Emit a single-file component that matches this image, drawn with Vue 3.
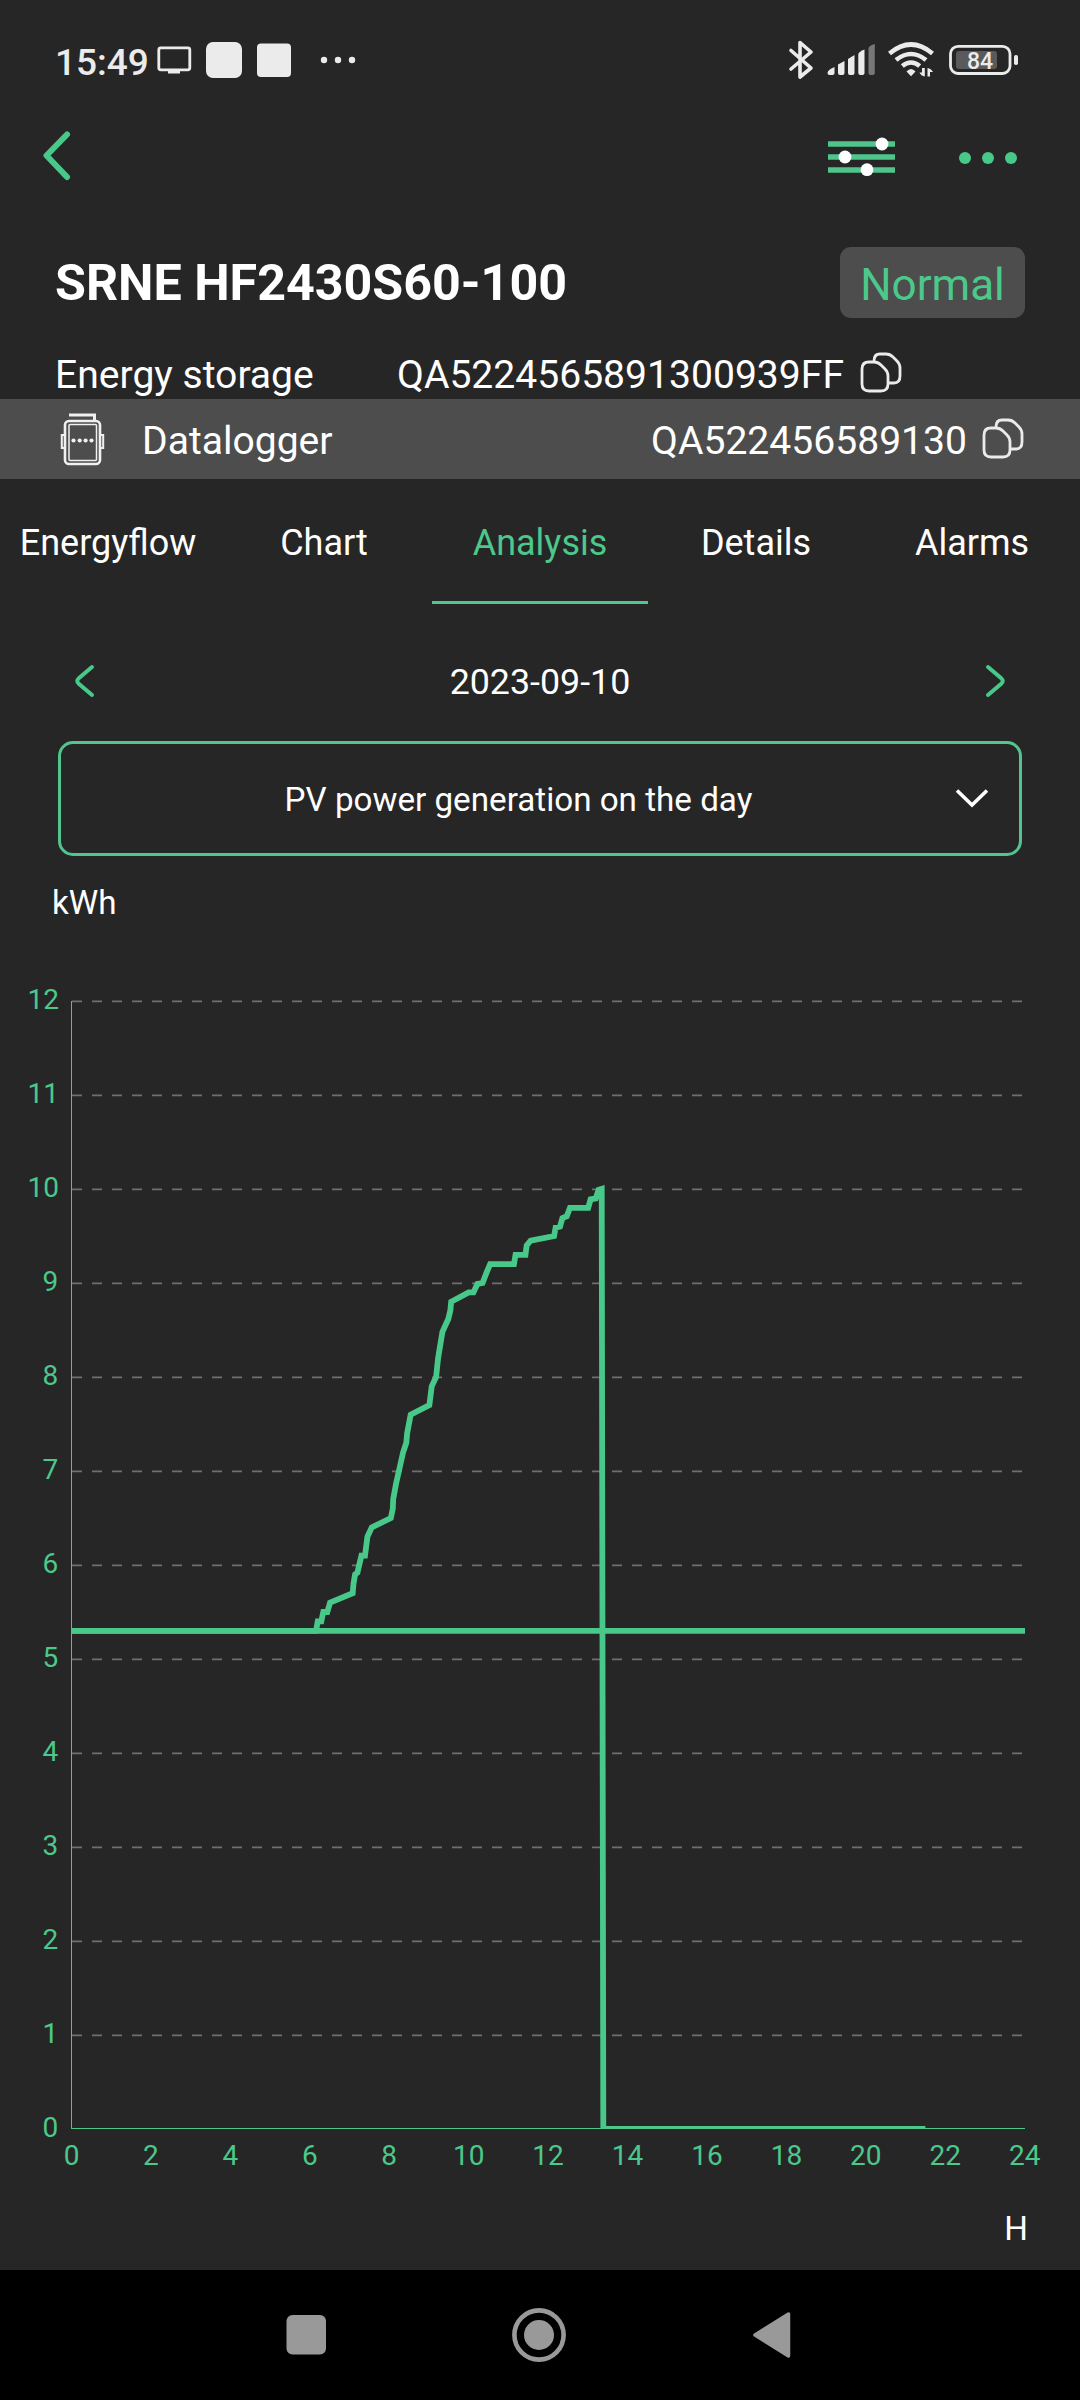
<template>
  <div class="phone">
    <div class="status">
      <span class="time">15:49</span>
      <svg class="notices" width="200" height="44" viewBox="156 38 200 44">
        <rect x="158.8" y="47.8" width="31" height="22" rx="2" fill="none" stroke="#ebebeb" stroke-width="2.8" />
        <rect x="168" y="70" width="12" height="3.5" fill="#ebebeb" />
        <rect x="206" y="42" width="36" height="36" rx="7" fill="#ebebeb" />
        <rect x="257" y="43.5" width="34" height="33.5" rx="4" fill="#ebebeb" />
        <circle v-for="x in [324, 338, 352]" :key="x" :cx="x" cy="60" r="3.2" fill="#ebebeb" />
      </svg>
      <svg class="bluetooth" width="28" height="44" viewBox="787 38 28 44">
        <path d="M791 50.5 L811 68 L800 77 V42.5 L811 52 L791 69" />
      </svg>
      <svg width="50" height="34" viewBox="826 44 50 34" fill="#ebebeb">
        <path d="M827.5 74 Q827.5 71 834.5 68 V74 Q834.5 76 832.5 76 H829.5 Q827.5 76 827.5 74Z" />
        <path d="M838 65.5 L844.5 62 V74 Q844.5 76 842.5 76 H840 Q838 76 838 74Z" />
        <path d="M848 60 L854.5 56 V74 Q854.5 76 852.5 76 H850 Q848 76 848 74Z" />
        <path d="M858.3 55 Q859 52.5 864.5 50.5 V74 Q864.5 76 862.5 76 H860.3 Q858.3 76 858.3 74Z" />
        <path d="M868.5 49 Q869.5 46.5 874.8 45 V74 Q874.8 76 872.8 76 H870.5 Q868.5 76 868.5 74Z" fill="#777" />
      </svg>
      <svg class="wifi" width="48" height="36" viewBox="887 43 48 36">
        <path d="M889.5 54.5 Q911 36.5 932.5 54.5" />
        <path d="M896 61 Q911 49 926 61" />
        <path d="M902.3 67 Q911 60 919.7 67" />
        <path class="solid" d="M906.5 72.5 Q911 67.5 915.5 72.5 L911 77.3Z" />
        <path class="solid" d="M922 77.5 V69 H924.8 V77.5 Q921 77 919.5 73.5 H922Z M927.5 69 Q931 69.5 933 73 H930 V77.5 H927.5Z" />
      </svg>
      <svg width="70" height="32" viewBox="949 44 70 32">
        <rect x="950.5" y="46.3" width="59.5" height="27.2" rx="7.5" fill="none" stroke="#ebebeb" stroke-width="2.8" />
        <rect x="956" y="51" width="41" height="18" rx="3" fill="#5a5a5a" />
        <rect x="1014" y="55" width="4" height="10" rx="1.8" fill="#ebebeb" />
        <text x="980" y="68.8" class="level">84</text>
      </svg>
    </div>

    <div class="header">
      <svg width="28" height="52" viewBox="43 130 28 52">
        <path d="M67 134.5 L46.5 155.5 L67 177" fill="none" stroke="#48c98a" stroke-width="6" stroke-linecap="round" stroke-linejoin="round" />
      </svg>
      <svg class="settings" width="67" height="42" viewBox="828 136 67 42">
        <path d="M828 144 H895 M828 157 H895 M828 170 H895" stroke="#4fc58b" stroke-width="5.6" />
        <circle cx="882" cy="144" r="6.4" fill="#fff" />
        <circle cx="845" cy="157" r="6.4" fill="#fff" />
        <circle cx="867" cy="169.7" r="6.4" fill="#fff" />
      </svg>
      <div class="more"><i></i><i></i><i></i></div>
    </div>

    <div class="title-row">
      <h1>SRNE HF2430S60-100</h1>
      <span class="badge">Normal</span>
    </div>

    <div class="info-row">
      <span class="kind">Energy storage</span>
      <span>QA5224565891300939FF</span>
      <svg class="copy" width="42" height="42" viewBox="0 0 42 42">
        <path :d="copyIcon" />
      </svg>
    </div>

    <div class="logger-row">
      <svg class="logger" width="46" height="54" viewBox="59 411 46 54">
        <path d="M69 414 H94.5 V419.5" stroke-width="3" />
        <rect x="65" y="420" width="35" height="43" rx="4" stroke-width="2.6" />
        <rect x="69" y="423.5" width="27.5" height="36" rx="1" stroke-width="1.5" />
        <path d="M65 434 H61.8 V447 H65 M100 434 H103.2 V447 H100" stroke-width="2" />
        <circle v-for="x in [73.5, 79.7, 85.6, 91.5]" :key="x" :cx="x" cy="439.5" r="2.1" class="dot" />
      </svg>
      <span class="name">Datalogger</span>
      <span class="serial">QA522456589130</span>
      <svg class="copy" width="42" height="42" viewBox="0 0 42 42">
        <path :d="copyIcon" />
      </svg>
    </div>

    <div class="tabs">
      <div v-for="tab in tabs" :key="tab" class="tab" :class="{ active: tab === current }" @click="current = tab">
        {{ tab }}
      </div>
    </div>

    <div class="date-row">
      <svg class="arrow" width="24" height="38" viewBox="0 0 24 38">
        <path d="M20 5 L6.5 16.6 Q4 19 6.5 21.4 L20 33" />
      </svg>
      <span>2023-09-10</span>
      <svg class="arrow" width="24" height="38" viewBox="0 0 24 38">
        <path d="M4 5 L17.5 16.6 Q20 19 17.5 21.4 L4 33" />
      </svg>
    </div>

    <div class="select">
      <span>PV power generation on the day</span>
      <svg width="34" height="22" viewBox="0 0 34 22">
        <path d="M2 2.5 L17 17 L32 2.5" fill="none" stroke="#fff" stroke-width="3.6" />
      </svg>
    </div>

    <div class="unit-y">kWh</div>

    <svg class="chart" width="1080" height="1277" viewBox="0 923 1080 1277">
      <clipPath id="plot">
        <rect x="71" y="1001" width="954" height="1128" />
      </clipPath>
      <g v-for="n in 13" :key="'y' + n">
        <line v-if="n > 1" x1="72" x2="1025" :y1="py(n - 1) + 0.3" :y2="py(n - 1) + 0.3" class="grid" />
        <text :x="n > 10 ? 27.5 : 42.6" :y="py(n - 1) + 8" class="label">{{ n - 1 }}</text>
      </g>
      <line x1="71.5" x2="71.5" y1="1001" y2="2129" class="axis" />
      <line x1="71" x2="1025" y1="2128.5" y2="2128.5" class="axis" />
      <g clip-path="url(#plot)">
        <line x1="71" x2="1025" :y1="py(5.3)" :y2="py(5.3)" class="series" />
        <polyline :points="line" class="series" />
      </g>
      <text v-for="n in 13" :key="'x' + n" :x="px((n - 1) * 2)" y="2165" class="label mid">{{ (n - 1) * 2 }}</text>
    </svg>

    <div class="unit-x">H</div>

    <div class="navbar">
      <svg width="1080" height="130" viewBox="0 2270 1080 130" fill="#999">
        <rect x="286.5" y="2315" width="39.5" height="39.5" rx="6" />
        <circle cx="539" cy="2335" r="24.6" fill="none" stroke="#999" stroke-width="4.6" />
        <circle cx="539" cy="2335" r="15" />
        <path d="M755 2335 L788.5 2314 V2356 Z" stroke="#999" stroke-width="3.5" stroke-linejoin="round" />
      </svg>
    </div>
  </div>
</template>

<script setup>
import { ref } from 'vue'

const tabs = ['Energyflow', 'Chart', 'Analysis', 'Details', 'Alarms']
const current = ref('Analysis')

const copyIcon =
  'M9 10 H14 Q18 10 21 13 L25 17 Q28 20 28 24 V32 Q28 39 21 39 H9 Q2 39 2 32 V17 Q2 10 9 10Z ' +
  'M14 10 V9 Q14 2 20 2 H26 Q30 2 33 5 L37 9 Q40 12 40 16 V24 Q40 31 34 31 H29'

// hour, kWh
const points = [
  [0, 5.3], [6.156, 5.3], [6.2, 5.4], [6.29, 5.4], [6.34, 5.5], [6.44, 5.5], [6.51, 5.6],
  [7.08, 5.7], [7.1, 5.8], [7.14, 5.9], [7.2, 5.92], [7.3, 6.1], [7.39, 6.1], [7.45, 6.3], [7.56, 6.4],
  [8.04, 6.5], [8.09, 6.6], [8.1, 6.7], [8.17, 6.86], [8.35, 7.2], [8.43, 7.3], [8.45, 7.4], [8.54, 7.6],
  [9.01, 7.7], [9.07, 7.9], [9.18, 8], [9.23, 8.2], [9.34, 8.48], [9.49, 8.62], [9.54, 8.71], [9.56, 8.8],
  [10, 8.9], [10.12, 8.9], [10.22, 8.99], [10.35, 9], [10.45, 9.11], [10.54, 9.2],
  [11.14, 9.2], [11.18, 9.3], [11.43, 9.3], [11.46, 9.4], [11.56, 9.45],
  [12.15, 9.5], [12.19, 9.59], [12.3, 9.6], [12.36, 9.69], [12.47, 9.71], [12.55, 9.8],
  [13.01, 9.8], [13.07, 9.89], [13.2, 9.9], [13.27, 9.99], [13.35, 10], [13.39, 0], [21.5, 0]
]

const px = (h) => 71.5 + (h * 953.2) / 24
const py = (v) => 2129 - v * 94

const line = points.map(([h, v]) => px(h) + ',' + py(v)).join(' ')
</script>

<style>
body {
  margin: 0;
  background: #262626;
}
</style>

<style scoped>
.phone {
  display: flex;
  flex-direction: column;
  width: 1080px;
  height: 2400px;
  overflow: hidden;
  background: #262626;
  color: #fff;
  font-family: Roboto, sans-serif;
}
svg {
  display: block;
  flex: none;
}
.status {
  display: flex;
  align-items: center;
  height: 120px;
  margin-bottom: -4px;
  padding: 0 61px 0 55px;
  color: #ebebeb;
}
.time {
  width: 101px;
  padding-top: 4px;
  font-size: 37px;
  font-weight: 500;
}
.notices {
  margin-right: auto;
}
.bluetooth {
  margin-right: 11px;
}
.bluetooth path {
  fill: none;
  stroke: #ebebeb;
  stroke-width: 3.6;
  stroke-linecap: round;
  stroke-linejoin: round;
}
.wifi {
  margin: 0 14px 0 11px;
}
.wifi path {
  fill: none;
  stroke: #ebebeb;
  stroke-width: 4.6;
}
.wifi .solid {
  fill: #ebebeb;
  stroke: none;
}
.level {
  fill: #ebebeb;
  font-size: 23px;
  font-weight: 500;
  text-anchor: middle;
}
.header {
  display: flex;
  align-items: center;
  height: 80px;
  padding: 0 63px 0 43px;
}
.settings {
  margin: 2px 0 0 auto;
}
.more {
  display: flex;
  gap: 11px;
  margin: 3px 0 0 64px;
}
.more i {
  width: 12px;
  height: 12px;
  border-radius: 50%;
  background: #48c98a;
}
.title-row {
  display: flex;
  justify-content: space-between;
  align-items: center;
  height: 71px;
  margin-top: 51px;
  padding: 0 55px;
}
h1 {
  margin: 0;
  font-size: 50.2px;
  font-weight: 700;
}
.badge {
  box-sizing: border-box;
  width: 185px;
  height: 71px;
  padding-top: 4px;
  border-radius: 11px;
  background: #4d4d4d;
  color: #4cc88b;
  font-size: 44px;
  line-height: 68px;
  text-align: center;
}
.info-row {
  display: flex;
  align-items: center;
  box-sizing: border-box;
  height: 81px;
  padding: 33px 55px 0;
  font-size: 39.1px;
}
.kind {
  width: 342px;
}
.copy {
  margin: -4px 0 0 16px;
}
.copy path {
  fill: none;
  stroke: #ebebeb;
  stroke-width: 2.8;
}
.logger-row {
  display: flex;
  align-items: center;
  box-sizing: border-box;
  height: 80px;
  padding: 4px 56px 0 59px;
  background: #4d4d4d;
  font-size: 39.1px;
}
.logger-row .copy {
  margin-left: 15px;
}
.logger {
  margin-top: -4px;
  fill: none;
  stroke: #f0f0f0;
}
.logger .dot {
  fill: #f0f0f0;
  stroke: none;
}
.name {
  margin-left: 37px;
}
.serial {
  margin-left: auto;
}
.tabs {
  display: grid;
  grid-template-columns: repeat(5, 216px);
  height: 123px;
}
.tab {
  box-sizing: border-box;
  padding-top: 7px;
  border-bottom: 3px solid transparent;
  font-size: 36px;
  line-height: 115px;
  text-align: center;
}
.active {
  border-color: #52c58e;
  color: #4cc88b;
}
.date-row {
  display: flex;
  justify-content: space-between;
  align-items: center;
  height: 78px;
  margin: 40px 72px 21px;
  font-size: 35.8px;
}
.date-row span {
  padding-top: 2px;
}
.arrow path {
  fill: none;
  stroke: #48c98a;
  stroke-width: 4;
  stroke-linecap: round;
}
.select {
  display: flex;
  align-items: center;
  box-sizing: border-box;
  height: 115px;
  margin: 0 58px;
  padding: 0 30px 0 21px;
  border: 3px solid #52c58e;
  border-radius: 15px;
  font-size: 33.2px;
}
.select span {
  flex: 1;
  padding-top: 2px;
  text-align: center;
}
.unit-y {
  height: 41px;
  margin: 26px 0 0 52px;
  font-size: 33.2px;
  line-height: 41px;
}
.grid {
  stroke: #6f6f6f;
  stroke-width: 1.7;
  stroke-dasharray: 10 10;
}
.axis {
  stroke: #48c98a;
  stroke-width: 1;
}
.series {
  fill: none;
  stroke: #48c98a;
  stroke-width: 5.8;
}
.label {
  fill: #4cc88b;
  font-size: 28px;
}
.mid {
  text-anchor: middle;
}
.unit-x {
  height: 57px;
  margin-bottom: 13px;
  padding-right: 52px;
  font-size: 33.2px;
  line-height: 57px;
  text-align: right;
}
.navbar {
  height: 130px;
  background: #000;
}
</style>
